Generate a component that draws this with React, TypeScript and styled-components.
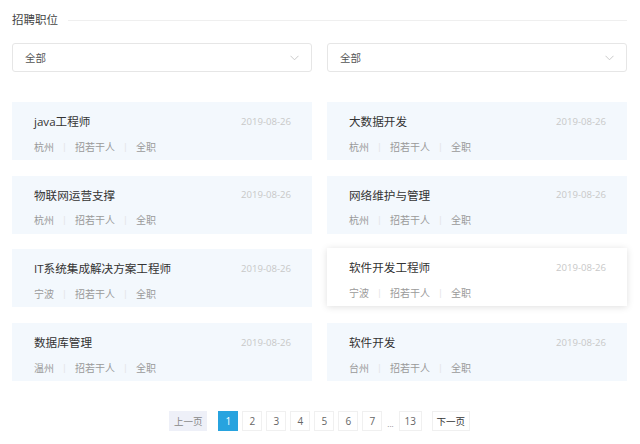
import * as React from 'react';
import styled, { createGlobalStyle } from 'styled-components';

const GlobalStyle = createGlobalStyle`
  body {
    margin: 0;
    background: #fff;
    font-family: "Open Sans", "Noto Sans CJK SC", sans-serif;
  }
`;

interface IJob {
  title: string;
  city: string;
  date: string;
  active?: boolean;
}

const jobs: IJob[] = [
  { title: 'java工程师', city: '杭州', date: '2019-08-26' },
  { title: '大数据开发', city: '杭州', date: '2019-08-26' },
  { title: '物联网运营支撑', city: '杭州', date: '2019-08-26' },
  { title: '网络维护与管理', city: '杭州', date: '2019-08-26' },
  { title: 'IT系统集成解决方案工程师', city: '宁波', date: '2019-08-26' },
  { title: '软件开发工程师', city: '宁波', date: '2019-08-26', active: true },
  { title: '数据库管理', city: '温州', date: '2019-08-26' },
  { title: '软件开发', city: '台州', date: '2019-08-26' },
];

const Page = styled.div`
  width: 615px;
  padding: 9px 13px 0 12px;
`;

const Header = styled.div`
  display: flex;
  align-items: center;
  height: 22px;
`;

const Title = styled.h2`
  margin: 0;
  font-size: 11.5px;
  font-weight: normal;
  color: #444;
  line-height: 22px;
`;

const Rule = styled.div`
  flex: 1;
  height: 1px;
  margin-left: 10px;
  background: #efefef;
`;

const Filters = styled.div`
  display: grid;
  grid-template-columns: 300px 300px;
  column-gap: 15px;
  margin-top: 12px;
`;

const Select = styled.div`
  display: flex;
  align-items: center;
  justify-content: space-between;
  height: 29px;
  box-sizing: border-box;
  padding: 0 12px;
  border: 1px solid #e6e6e6;
  border-radius: 3px;
  background: #fff;
  font-size: 10.5px;
  color: #555;
`;

const Grid = styled.div`
  display: grid;
  grid-template-columns: 300px 300px;
  column-gap: 15px;
  row-gap: 15.7px;
  margin-top: 30px;
`;

const Card = styled.div<{ $active?: boolean }>`
  height: 58px;
  box-sizing: border-box;
  padding: 11px 21px 0 22px;
  background: ${(p) => (p.$active ? '#fff' : '#f3f8fd')};
  box-shadow: ${(p) => (p.$active ? '0 1px 7px rgba(0, 0, 0, 0.13)' : 'none')};
  transform: ${(p) => (p.$active ? 'translateY(-1px)' : 'none')};
`;

const CardTop = styled.div`
  display: flex;
  align-items: center;
  justify-content: space-between;
  height: 16px;
`;

const JobTitle = styled.span`
  font-size: 11.6px;
  color: #333;
`;

const JobDate = styled.span`
  font-size: 9.6px;
  color: #c8c8c8;
`;

const Meta = styled.div`
  display: flex;
  align-items: center;
  margin-top: 10px;
  height: 14px;
  font-size: 10px;
  color: #9a9a9a;
`;

const Sep = styled.span`
  margin: 0 8px;
  color: #e2e2e2;
  font-size: 9px;
`;

const Pager = styled.div`
  display: flex;
  justify-content: center;
  align-items: center;
  gap: 4px;
  margin-top: 30px;
`;

const PageBtn = styled.span<{ $active?: boolean; $wide?: boolean }>`
  display: inline-flex;
  align-items: center;
  justify-content: center;
  height: 20px;
  min-width: ${(p) => (p.$wide ? '23px' : '20px')};
  box-sizing: border-box;
  border: 1px solid ${(p) => (p.$active ? '#27a3df' : '#f0f0f0')};
  background: ${(p) => (p.$active ? '#27a3df' : '#fff')};
  color: ${(p) => (p.$active ? '#fff' : '#666')};
  font-size: 10px;
`;

const NavBtn = styled.span<{ $disabled?: boolean }>`
  display: inline-flex;
  align-items: center;
  justify-content: center;
  width: 38px;
  height: 20px;
  box-sizing: border-box;
  border: 1px solid ${(p) => (p.$disabled ? '#eef0f8' : '#f0f0f0')};
  background: ${(p) => (p.$disabled ? '#eef0f8' : '#fff')};
  color: ${(p) => (p.$disabled ? '#888' : '#333')};
  font-size: 9.5px;
  margin: ${(p) => (p.$disabled ? '0 7px 0 0' : '0 0 0 6px')};
`;

const Dots = styled.span`
  font-size: 8px;
  color: #888;
  padding: 4px 1px 0;
`;

const Chevron = () => (
  <svg width="9" height="6" viewBox="0 0 9 6">
    <polyline points="0.5,0.8 4.5,4.8 8.5,0.8" fill="none" stroke="#c4c4c4" strokeWidth="0.9" />
  </svg>
);

const App = () => (
  <Page>
    <GlobalStyle />
    <Header>
      <Title>招聘职位</Title>
      <Rule />
    </Header>
    <Filters>
      <Select>
        全部
        <Chevron />
      </Select>
      <Select>
        全部
        <Chevron />
      </Select>
    </Filters>
    <Grid>
      {jobs.map((job) => (
        <Card key={job.title} $active={job.active}>
          <CardTop>
            <JobTitle>{job.title}</JobTitle>
            <JobDate>{job.date}</JobDate>
          </CardTop>
          <Meta>
            {job.city}
            <Sep>|</Sep>
            招若干人
            <Sep>|</Sep>
            全职
          </Meta>
        </Card>
      ))}
    </Grid>
    <Pager>
      <NavBtn $disabled>上一页</NavBtn>
      <PageBtn $active>1</PageBtn>
      {[2, 3, 4, 5, 6, 7].map((n) => (
        <PageBtn key={n}>{n}</PageBtn>
      ))}
      <Dots>...</Dots>
      <PageBtn $wide>13</PageBtn>
      <NavBtn>下一页</NavBtn>
    </Pager>
  </Page>
);

export default App;
